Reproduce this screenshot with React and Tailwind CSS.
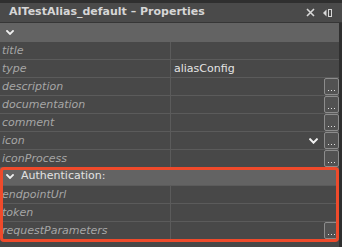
import React from "react";

const Chevron = ({ w = 8, h = 5 }) => (
  <svg width={w} height={h} viewBox="0 0 8 5">
    <path d="M1 1 L4 4 L7 1" fill="none" stroke="#f0f0f0" strokeWidth="1.8" strokeLinecap="square" />
  </svg>
);

const Dots = () => (
  <div className="w-[15px] h-[17px] shrink-0 border border-[#8c8c8c] rounded-[2px] bg-[#525252] flex items-end justify-center gap-[2px] pb-[3px]">
    <span className="w-[1px] h-[1px] bg-[#e0e0e0]" />
    <span className="w-[1px] h-[1px] bg-[#e0e0e0]" />
    <span className="w-[1px] h-[1px] bg-[#e0e0e0]" />
  </div>
);

const Row = ({ label, value, btn, chev }) => (
  <div className="flex h-[18px] shrink-0 border-b border-[#5b5b5b] bg-[#484848]">
    <div className="w-[171px] border-r border-[#5b5b5b] pl-[2px] italic text-[11px] leading-[17px] text-[#a6a6a6] whitespace-nowrap overflow-hidden">
      {label}
    </div>
    <div className="flex-1 flex items-center min-w-0">
      {value && <span className="pl-[3px] text-[11px] leading-[17px] text-[#e4e4e4]">{value}</span>}
      <div className="flex-1" />
      {chev && (
        <div className="mr-[6px] flex items-center">
          <Chevron w={9} h={6} />
        </div>
      )}
      {btn && <Dots />}
    </div>
  </div>
);

export default function App() {
  return (
    <div className="w-[342px] h-[247px] bg-[#2f2f2f] overflow-hidden relative font-['DejaVu_Sans',sans-serif] flex flex-col">
      <div className="h-[3px] shrink-0" />
      <div className="h-[19px] shrink-0 bg-[#4a4a4a] flex items-center pl-[9px]">
        <span className="font-bold text-[11px] text-[#d6d6d6] whitespace-nowrap">AITestAlias_default – Properties</span>
        <svg width="9" height="9" viewBox="0 0 9 9" className="ml-auto mr-[8px]">
          <path d="M1 1 L8 8 M8 1 L1 8" stroke="#d8d8d8" strokeWidth="1.6" />
        </svg>
        <svg width="9" height="8" viewBox="0 0 9 8" className="mr-[10px]">
          <path d="M0 4 L3.5 0.5 L3.5 7.5 Z" fill="#d8d8d8" />
          <rect x="5.5" y="0.5" width="3" height="7" fill="none" stroke="#d8d8d8" strokeWidth="1" />
        </svg>
      </div>
      <div className="h-[1px] shrink-0 bg-[#363636]" />
      <div className="w-[339px] flex-1 flex flex-col">
        <div className="h-[19px] shrink-0 bg-[#636363] flex items-center pl-[6px]">
          <Chevron />
        </div>
        <Row label="title" />
        <Row label="type" value="aliasConfig" />
        <Row label="description" btn />
        <Row label="documentation" btn />
        <Row label="comment" btn />
        <Row label="icon" btn chev />
        <Row label="iconProcess" btn />
        <div className="h-[18px] shrink-0 bg-[#636363] flex items-center pl-[6px] border-b border-[#5b5b5b]">
          <Chevron />
          <span className="ml-[7px] text-[11px] text-[#e2e2e2]">Authentication:</span>
        </div>
        <Row label="endpointUrl" />
        <Row label="token" />
        <Row label="requestParameters" btn />
        <div className="flex-1 bg-[#484848]" />
      </div>
      <div className="absolute left-0 top-[167px] w-[339px] h-[75px] border-[3px] border-[#ef4a2b] rounded-[4px]" />
    </div>
  );
}
